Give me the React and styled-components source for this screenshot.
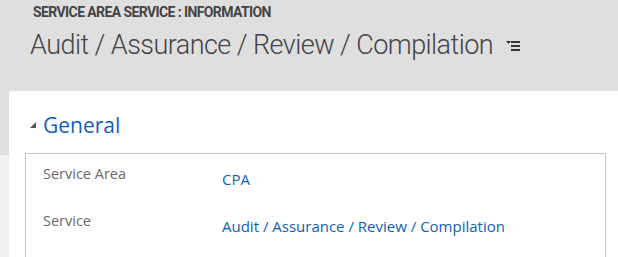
import React from "react";
import styled, { createGlobalStyle } from "styled-components";

const Global = createGlobalStyle`
  html, body {
    margin: 0;
    padding: 0;
    background: #dfdfdf;
    font-family: "Open Sans", "Noto Sans", sans-serif;
  }
`;

const Page = styled.div`
  width: 618px;
  height: 257px;
  overflow: hidden;
  background: #dfdfdf;
  display: flex;
  flex-direction: column;
`;

const Header = styled.div`
  flex-shrink: 0;
  height: 91px;
  padding: 3px 0 0 30px;
  box-sizing: border-box;
`;

const EntityName = styled.div`
  font-family: Roboto, "Open Sans", sans-serif;
  font-size: 14px;
  font-weight: 700;
  color: #444;
  padding-left: 3px;
  line-height: 18px;
  letter-spacing: -0.6px;
`;

const TitleRow = styled.div`
  display: flex;
  align-items: center;
  gap: 13px;
  margin-top: 7px;
`;

const Title = styled.h1`
  margin: 0;
  font-family: Roboto, "Open Sans", sans-serif;
  font-size: 27px;
  font-weight: 300;
  color: #444;
  line-height: 34px;
  letter-spacing: -0.55px;
`;

const Body = styled.div`
  flex: 1;
  display: flex;
  overflow: hidden;
`;

const Gutter = styled.div`
  width: 9px;
  background: linear-gradient(#dfdfdf 0 64px, #f0f0f0 64px);
`;

const Panel = styled.div`
  flex: 1;
  background: #fff;
  padding: 20px 12px 0 16px;
`;

const SectionHead = styled.div`
  display: flex;
  align-items: center;
  gap: 6px;
  padding-left: 4px;
  height: 28px;
`;

const SectionTitle = styled.span`
  font-size: 21px;
  color: #1160b7;
  line-height: 28px;
`;

const Box = styled.div`
  margin-top: 14px;
  border: 1px solid #c6c6c6;
  border-bottom: none;
  height: 120px;
  padding: 10px 0 0 17px;
`;

const Row = styled.div`
  display: grid;
  grid-template-columns: 179px 1fr;
  height: 47px;
`;

const Label = styled.div`
  font-size: 14.5px;
  color: #6a6a6a;
  line-height: 20px;
`;

const Value = styled.div`
  font-size: 15px;
  color: #1160b7;
  line-height: 20px;
  padding-top: 5px;
`;

function MenuIcon() {
  return (
    <svg width="14" height="12" viewBox="0 0 14 12">
      <path d="M0 2h5l-2.5 3z" fill="#333" />
      <rect x="5" y="2" width="9" height="2" fill="#333" />
      <rect x="5" y="6" width="9" height="2" fill="#333" />
      <rect x="5" y="10" width="9" height="2" fill="#333" />
    </svg>
  );
}

function Caret() {
  return (
    <svg width="8" height="8" viewBox="0 0 8 8">
      <path d="M7 1v6H1z" fill="#555" />
    </svg>
  );
}

export default function App() {
  const fields = [
    ["Service Area", "CPA"],
    ["Service", "Audit / Assurance / Review / Compilation"],
  ];
  return (
    <Page>
      <Global />
      <Header>
        <EntityName>SERVICE AREA SERVICE : INFORMATION</EntityName>
        <TitleRow>
          <Title>Audit / Assurance / Review / Compilation</Title>
          <MenuIcon />
        </TitleRow>
      </Header>
      <Body>
        <Gutter />
        <Panel>
          <SectionHead>
            <Caret />
            <SectionTitle>General</SectionTitle>
          </SectionHead>
          <Box>
            {fields.map(([label, value]) => (
              <Row key={label}>
                <Label>{label}</Label>
                <Value>{value}</Value>
              </Row>
            ))}
          </Box>
        </Panel>
      </Body>
    </Page>
  );
}
